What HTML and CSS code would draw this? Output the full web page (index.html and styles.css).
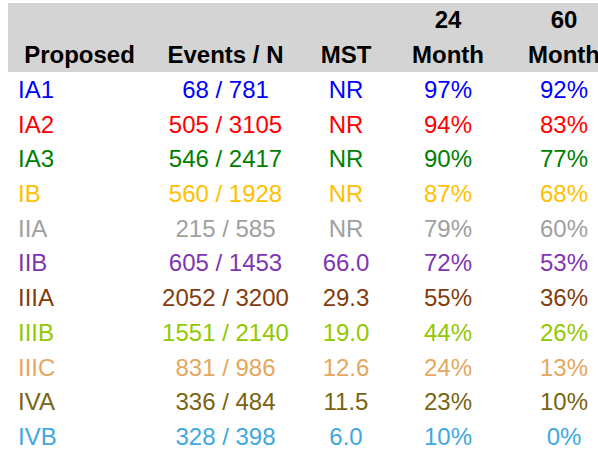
FILE: index.html
```html
<!DOCTYPE html>
<html>
<head>
<meta charset="utf-8">
<link rel="stylesheet" href="styles.css">
</head>
<body>
<div class="table">
  <div class="row head">
    <div class="cell c1"><br>Proposed</div>
    <div class="cell"><br>Events / N</div>
    <div class="cell"><br>MST</div>
    <div class="cell">24<br>Month</div>
    <div class="cell">60<br>Month</div>
  </div>
  <div class="body">
    <div class="row blue"><div class="cell c1">IA1</div><div class="cell">68 / 781</div><div class="cell">NR</div><div class="cell">97%</div><div class="cell">92%</div></div>
    <div class="row red"><div class="cell c1">IA2</div><div class="cell">505 / 3105</div><div class="cell">NR</div><div class="cell">94%</div><div class="cell">83%</div></div>
    <div class="row green"><div class="cell c1">IA3</div><div class="cell">546 / 2417</div><div class="cell">NR</div><div class="cell">90%</div><div class="cell">77%</div></div>
    <div class="row amber"><div class="cell c1">IB</div><div class="cell">560 / 1928</div><div class="cell">NR</div><div class="cell">87%</div><div class="cell">68%</div></div>
    <div class="row grey"><div class="cell c1">IIA</div><div class="cell">215 / 585</div><div class="cell">NR</div><div class="cell">79%</div><div class="cell">60%</div></div>
    <div class="row purple"><div class="cell c1">IIB</div><div class="cell">605 / 1453</div><div class="cell">66.0</div><div class="cell">72%</div><div class="cell">53%</div></div>
    <div class="row brown"><div class="cell c1">IIIA</div><div class="cell">2052 / 3200</div><div class="cell">29.3</div><div class="cell">55%</div><div class="cell">36%</div></div>
    <div class="row lime"><div class="cell c1">IIIB</div><div class="cell">1551 / 2140</div><div class="cell">19.0</div><div class="cell">44%</div><div class="cell">26%</div></div>
    <div class="row tan"><div class="cell c1">IIIC</div><div class="cell">831 / 986</div><div class="cell">12.6</div><div class="cell">24%</div><div class="cell">13%</div></div>
    <div class="row olive"><div class="cell c1">IVA</div><div class="cell">336 / 484</div><div class="cell">11.5</div><div class="cell">23%</div><div class="cell">10%</div></div>
    <div class="row sky"><div class="cell c1">IVB</div><div class="cell">328 / 398</div><div class="cell">6.0</div><div class="cell">10%</div><div class="cell">0%</div></div>
  </div>
</div>
</body>
</html>
```
FILE: styles.css
```css
html, body {
  margin: 0;
  padding: 0;
  background: #ffffff;
  overflow: hidden;
}
body {
  width: 598px;
  height: 463px;
  font-family: "Liberation Sans", Arial, sans-serif;
  font-size: 24px;
}
.table {
  padding: 3px 0 0 8px;
  width: 616px;
}
.row {
  display: grid;
  grid-template-columns: 143px 149px 92px 112px 120px;
  line-height: 34.7px;
  height: 34.7px;
}
.cell {
  text-align: center;
  white-space: nowrap;
}
.head {
  background: #d4d4d4;
  height: 69px;
  line-height: 34.5px;
  font-weight: bold;
  color: #000;
}
.body .c1 {
  text-align: left;
  padding-left: 10px;
}
.body {
  padding-top: 1px;
}
.blue { color: #0000ff; }
.red { color: #ff0000; }
.green { color: #008000; }
.amber { color: #ffc000; }
.grey { color: #a0a0a0; }
.purple { color: #7f35b2; }
.brown { color: #843c0c; }
.lime { color: #92c800; }
.tan { color: #e4a860; }
.olive { color: #7a6410; }
.sky { color: #40a8e0; }
```
